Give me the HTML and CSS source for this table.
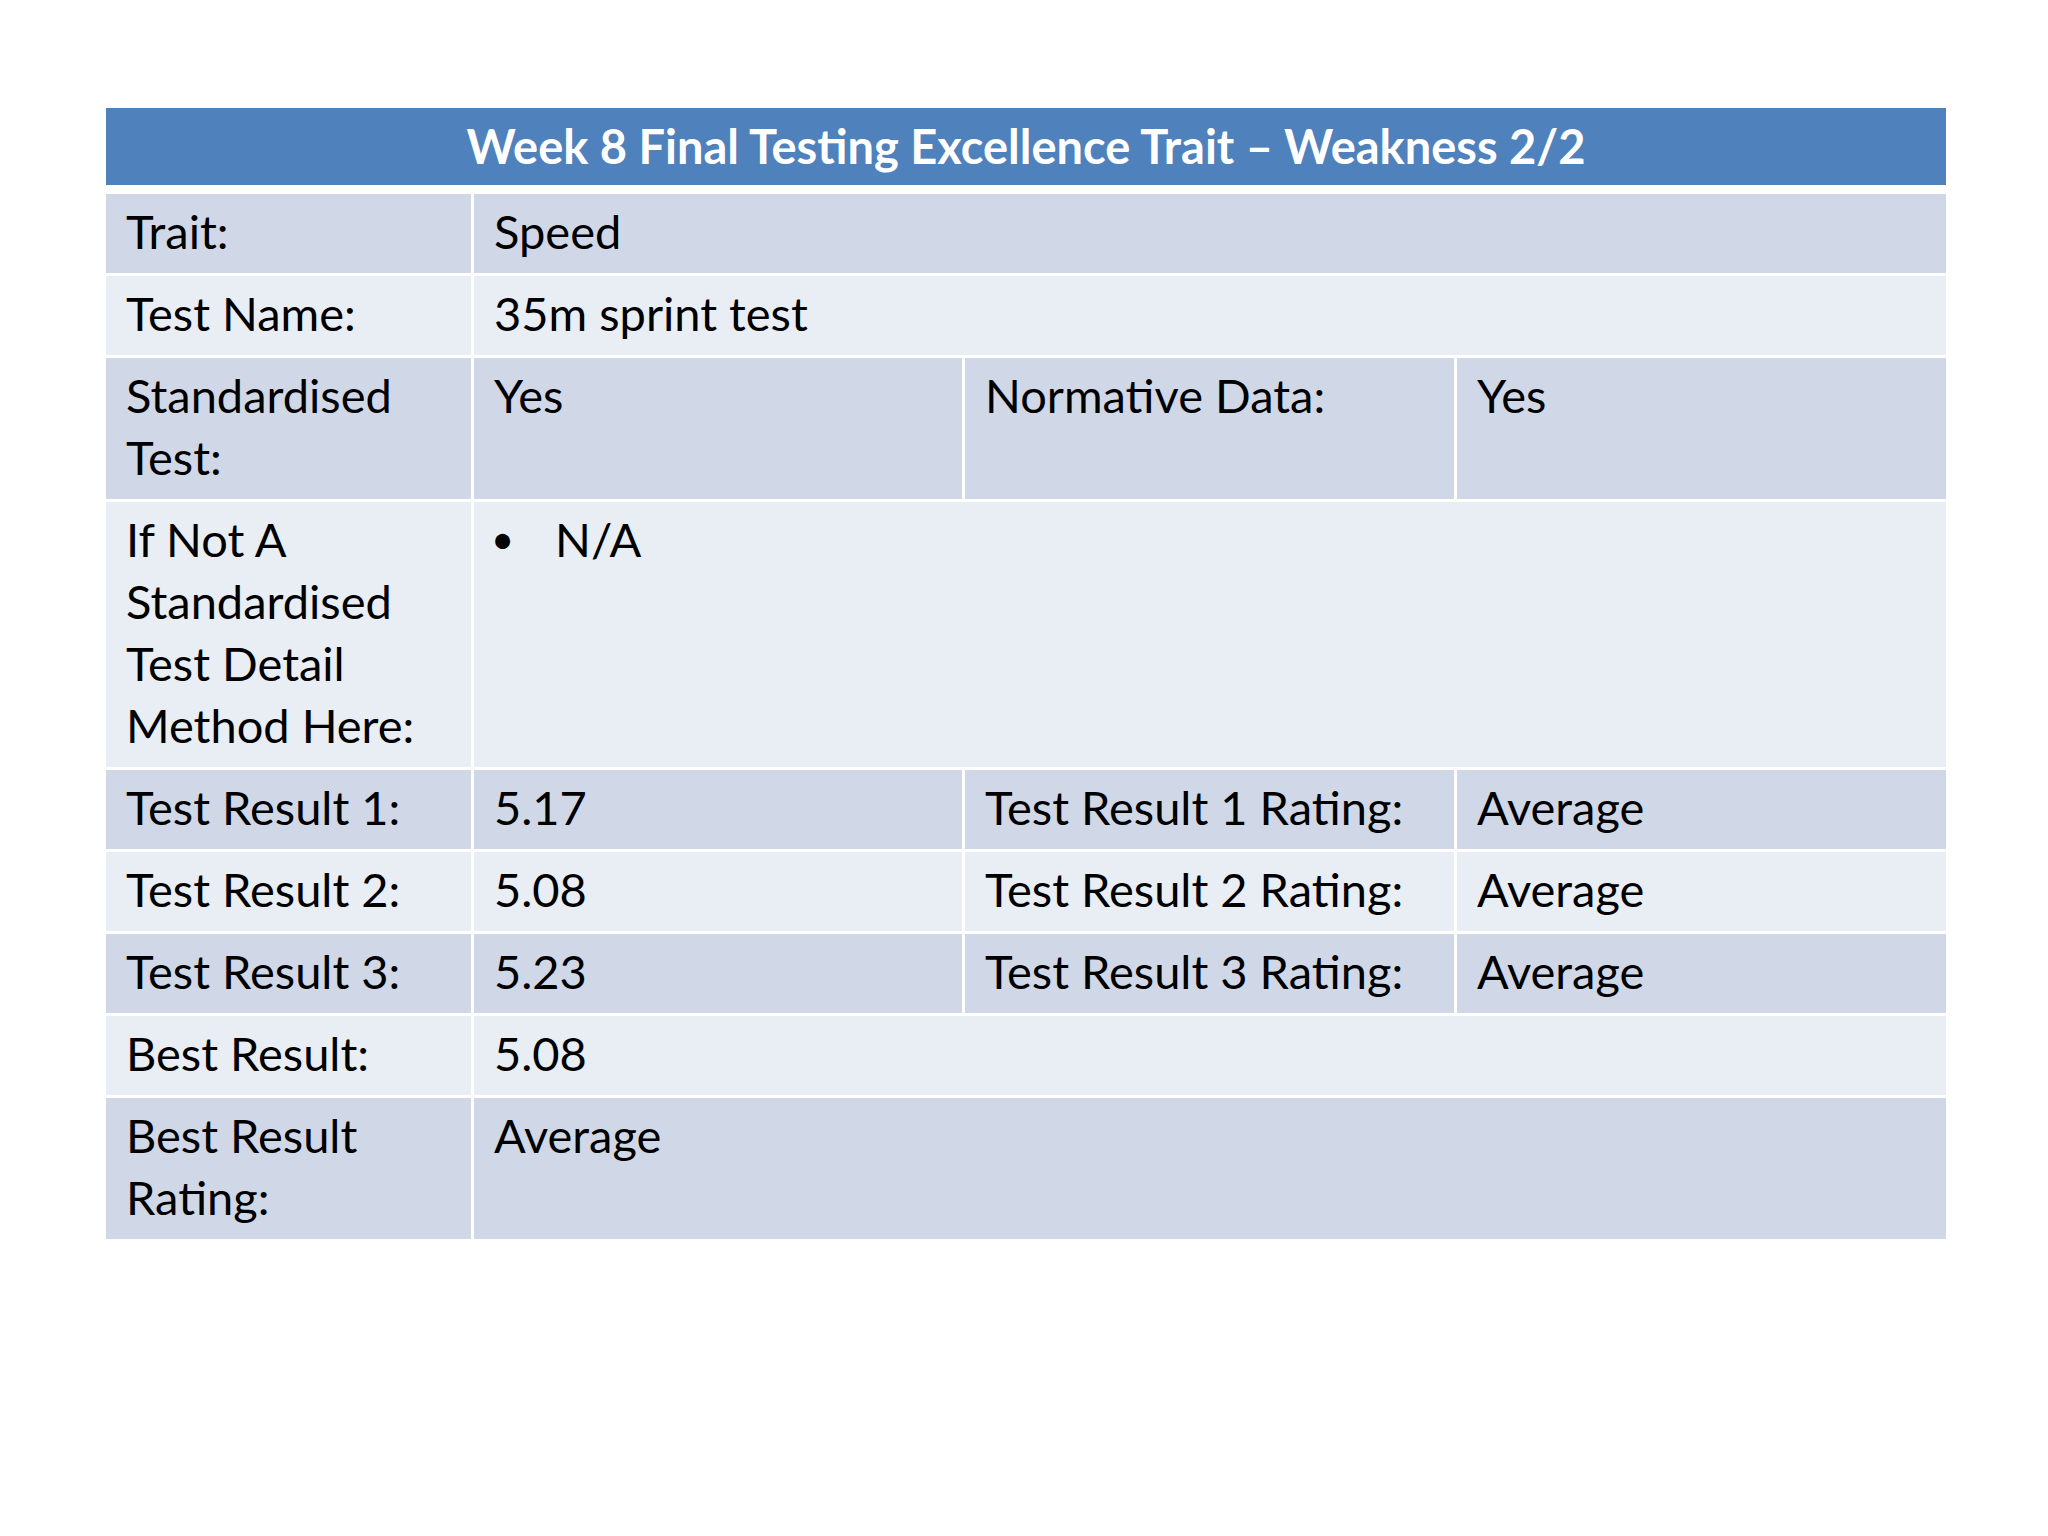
FILE: index.html
```
<!DOCTYPE html>
<html lang="en">
<head>
<meta charset="utf-8">
<title>Week 8 Final Testing Excellence Trait – Weakness 2/2</title>
<link rel="stylesheet" href="styles.css">
</head>
<body>
<main class="slide">
  <section class="sheet">
    <h1 class="title">Week 8 Final Testing Excellence Trait – Weakness 2/2</h1>
    <div class="grid">
      <div class="cell dark">Trait:</div>
      <div class="cell dark span3">Speed</div>

      <div class="cell light">Test Name:</div>
      <div class="cell light span3">35m sprint test</div>

      <div class="cell dark">Standardised Test:</div>
      <div class="cell dark">Yes</div>
      <div class="cell dark">Normative Data:</div>
      <div class="cell dark">Yes</div>

      <div class="cell light">If Not A Standardised Test Detail Method Here:</div>
      <div class="cell light span3">
        <ul class="bullets"><li><span class="dot">•</span><span>N/A</span></li></ul>
      </div>

      <div class="cell dark">Test Result 1:</div>
      <div class="cell dark">5.17</div>
      <div class="cell dark">Test Result 1 Rating:</div>
      <div class="cell dark">Average</div>

      <div class="cell light">Test Result 2:</div>
      <div class="cell light">5.08</div>
      <div class="cell light">Test Result 2 Rating:</div>
      <div class="cell light">Average</div>

      <div class="cell dark">Test Result 3:</div>
      <div class="cell dark">5.23</div>
      <div class="cell dark">Test Result 3 Rating:</div>
      <div class="cell dark">Average</div>

      <div class="cell light">Best Result:</div>
      <div class="cell light span3">5.08</div>

      <div class="cell dark">Best Result Rating:</div>
      <div class="cell dark span3">Average</div>
    </div>
  </section>
</main>
</body>
</html>
```

FILE: styles.css
```
html, body {
  margin: 0;
  padding: 0;
  background: #ffffff;
}

body {
  width: 2048px;
  height: 1536px;
  overflow: hidden;
  font-family: "Lato", "Liberation Sans", sans-serif;
  color: #000000;
}

.slide {
  padding: 108px 0 0 106px;
}

.sheet {
  width: 1840px;
}

.title {
  margin: 0 0 9px 0;
  padding: 7px 0 8px 0;
  background: #4f81bd;
  color: #ffffff;
  font-size: 47px;
  font-weight: 700;
  line-height: 62px;
  text-align: center;
}

.grid {
  display: grid;
  grid-template-columns: 365px 488px 489px 489px;
  column-gap: 3px;
  row-gap: 3px;
}

.cell {
  padding: 6px 20px 11px 20px;
  font-size: 47px;
  line-height: 62px;
}

.cell.tall {
  padding-bottom: 10px;
}

.dark {
  background: #d0d8e8;
}

.light {
  background: #e9edf4;
}

.span3 {
  grid-column: span 3;
}

.bullets {
  list-style: none;
  margin: 0;
  padding: 0;
}

.bullets li {
  display: flex;
}

.dot {
  width: 64px;
  flex: none;
  margin-left: -3px;
  font-size: 40px;
}
```
